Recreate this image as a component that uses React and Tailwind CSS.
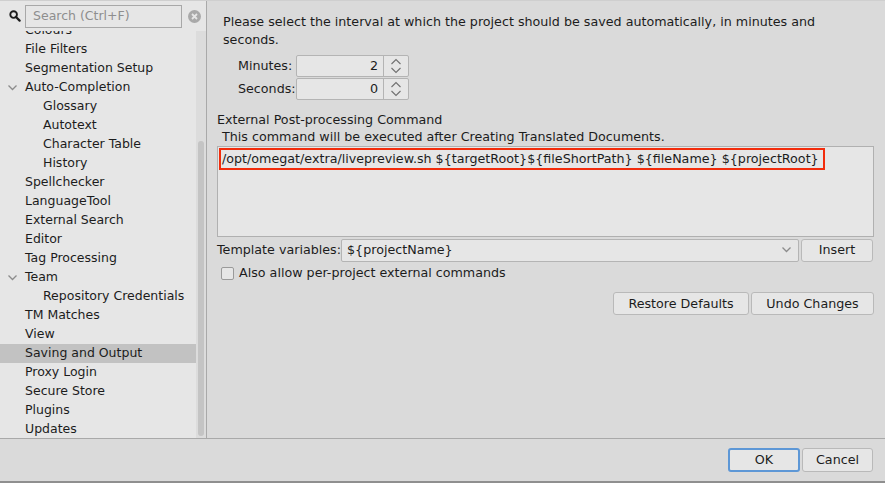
import React from 'react';

const font = { fontFamily: '"DejaVu Sans", "Liberation Sans", sans-serif' };

const treeItems = [
  { label: 'Colours', level: 1 },
  { label: 'File Filters', level: 1 },
  { label: 'Segmentation Setup', level: 1 },
  { label: 'Auto-Completion', level: 1, open: true },
  { label: 'Glossary', level: 2 },
  { label: 'Autotext', level: 2 },
  { label: 'Character Table', level: 2 },
  { label: 'History', level: 2 },
  { label: 'Spellchecker', level: 1 },
  { label: 'LanguageTool', level: 1 },
  { label: 'External Search', level: 1 },
  { label: 'Editor', level: 1 },
  { label: 'Tag Processing', level: 1 },
  { label: 'Team', level: 1, open: true },
  { label: 'Repository Credentials', level: 2 },
  { label: 'TM Matches', level: 1 },
  { label: 'View', level: 1 },
  { label: 'Saving and Output', level: 1, selected: true },
  { label: 'Proxy Login', level: 1 },
  { label: 'Secure Store', level: 1 },
  { label: 'Plugins', level: 1 },
  { label: 'Updates', level: 1 },
];

const Chevron = ({ className = '' }) => (
  <svg width="9" height="6" viewBox="0 0 9 6" className={className}>
    <path d="M0.5 0.5 L4.5 4.5 L8.5 0.5" fill="none" stroke="#8c8c8c" strokeWidth="1.3" />
  </svg>
);

const SpinArrows = () => (
  <svg width="12" height="16" viewBox="0 0 12 16">
    <path d="M1.5 6 L6 1.5 L10.5 6" fill="none" stroke="#707070" strokeWidth="1.1" />
    <path d="M1.5 10 L6 14.5 L10.5 10" fill="none" stroke="#707070" strokeWidth="1.1" />
  </svg>
);

const Spinner = ({ label, value }) => (
  <div className="flex items-center h-[23px]">
    <span className="w-[59px] pl-[1px]">{label}</span>
    <div className="flex h-[22px] border border-[#b4b4b4] rounded-[2px] bg-[#e6e6e6]">
      <div className="w-[87px] flex items-center justify-end pr-[5px] border-r border-[#b4b4b4]">{value}</div>
      <div className="w-[24px] flex items-center justify-center">
        <SpinArrows />
      </div>
    </div>
  </div>
);

const Button = ({ children, className = '', primary }) => (
  <button
    className={`h-[23px] rounded-[3px] bg-[#e6e6e6] text-[12.7px] text-[#1c1c1c] flex items-center justify-center ${
      primary ? 'border-2 border-[#5d97d6]' : 'border border-[#b9b9b9]'
    } ${className}`}
    style={font}
  >
    {children}
  </button>
);

export default function App() {
  return (
    <div className="w-[885px] h-[483px] bg-[#dadada] text-[12.7px] text-[#1c1c1c] flex flex-col overflow-hidden" style={font}>
      <div className="flex h-[439px] border-t border-[#cfcfcf] border-b border-b-[#a9a9a9]">
        {/* left navigation */}
        <div className="w-[206px] flex flex-col bg-[#e6e6e6] text-[12.5px]">
          <div className="h-[30px] flex items-start pl-[9px] pt-[4px]">
            <svg width="12" height="12" viewBox="0 0 13 13" className="mt-[5px]">
              <circle cx="5" cy="5" r="3.6" fill="none" stroke="#1c1c1c" strokeWidth="2" />
              <path d="M7.6 7.6 L11.5 11.5" stroke="#1c1c1c" strokeWidth="2.4" strokeLinecap="round" />
            </svg>
            <div className="ml-[4px] w-[157px] h-[23px] border border-[#a8a8a8] bg-[#e6e6e6] flex items-center pl-[7px] text-[#8e8e8e]">
              Search (Ctrl+F)
            </div>
            <svg width="13" height="13" viewBox="0 0 13 13" className="ml-[6px] mt-[5px]">
              <circle cx="6.5" cy="6.5" r="6.5" fill="#a9a9a9" />
              <path d="M4 4 L9 9 M9 4 L4 9" stroke="#e6e6e6" strokeWidth="1.8" />
            </svg>
          </div>
          <div className="flex-1 flex overflow-hidden">
            <div className="flex-1 overflow-hidden">
              <div className="-mt-[10px]">
                {treeItems.map((item) => (
                  <div
                    key={item.label}
                    className={`h-[19px] flex items-center ${item.selected ? 'bg-[#c2c2c2]' : ''}`}
                  >
                    <div className="w-[25px] flex items-center justify-start pl-[8px]">
                      {item.open && <Chevron />}
                    </div>
                    <span className={item.level === 2 ? 'pl-[18px]' : ''}>{item.label}</span>
                  </div>
                ))}
              </div>
            </div>
            <div className="w-[10px] bg-[#dcdcdc] flex justify-center">
              <div className="w-[6px] mt-[110px] mb-[2px] rounded-[3px] bg-[#c4c4c4]" />
            </div>
          </div>
        </div>
        <div className="w-[1px] bg-[#a9a9a9]" />
        {/* right content */}
        <div className="flex-1 flex flex-col pl-[10px] pr-[11px]">
          <p className="pl-[6px] pt-[12px] leading-[18px] pr-[40px]">
            Please select the interval at which the project should be saved automatically, in minutes and seconds.
          </p>
          <div className="pl-[20px] mt-[5px] flex flex-col">
            <Spinner label="Minutes:" value="2" />
            <Spinner label="Seconds:" value="0" />
          </div>
          <div className="mt-[11px] leading-[17px]">External Post-processing Command</div>
          <div className="pl-[5px] leading-[17px]">This command will be executed after Creating Translated Documents.</div>
          <div className="mt-[1px] h-[91px] border border-[#b0b0b0] bg-[#e6e6e6] pt-[1px] pl-[1px]">
            <div className="inline-flex items-center h-[22px] border-2 border-[#f22c0c] pl-[1px] pr-[4px]">
              /opt/omegat/extra/livepreview.sh ${'{targetRoot}'}${'{fileShortPath}'} ${'{fileName}'} ${'{projectRoot}'}
            </div>
          </div>
          <div className="flex items-center h-[24px] mt-[1px]">
            <span className="w-[124px]">Template variables:</span>
            <div className="w-[458px] h-[23px] border border-[#b4b4b4] rounded-[2px] bg-[#e6e6e6] flex items-center pl-[5px] pr-[7px]">
              <span className="flex-1">{'${projectName}'}</span>
              <Chevron />
            </div>
            <Button className="ml-[2px] w-[72px]">Insert</Button>
          </div>
          <label className="flex items-center h-[18px] mt-[2px] pl-[4px]">
            <span className="w-[13px] h-[13px] border border-[#9a9a9a] rounded-[2px] bg-[#e6e6e6]" />
            <span className="ml-[5px]">Also allow per-project external commands</span>
          </label>
          <div className="flex justify-end mt-[10px] gap-[2px]">
            <Button className="w-[136px]">Restore Defaults</Button>
            <Button className="w-[123px]">Undo Changes</Button>
          </div>
        </div>
      </div>
      <div className="flex-1 flex justify-end items-start pt-[9px] pr-[12px] gap-[2px] border-b-2 border-[#8f8f8f]">
        <Button primary className="w-[72px] h-[24px]">OK</Button>
        <Button className="w-[71px] h-[24px]">Cancel</Button>
      </div>
    </div>
  );
}
